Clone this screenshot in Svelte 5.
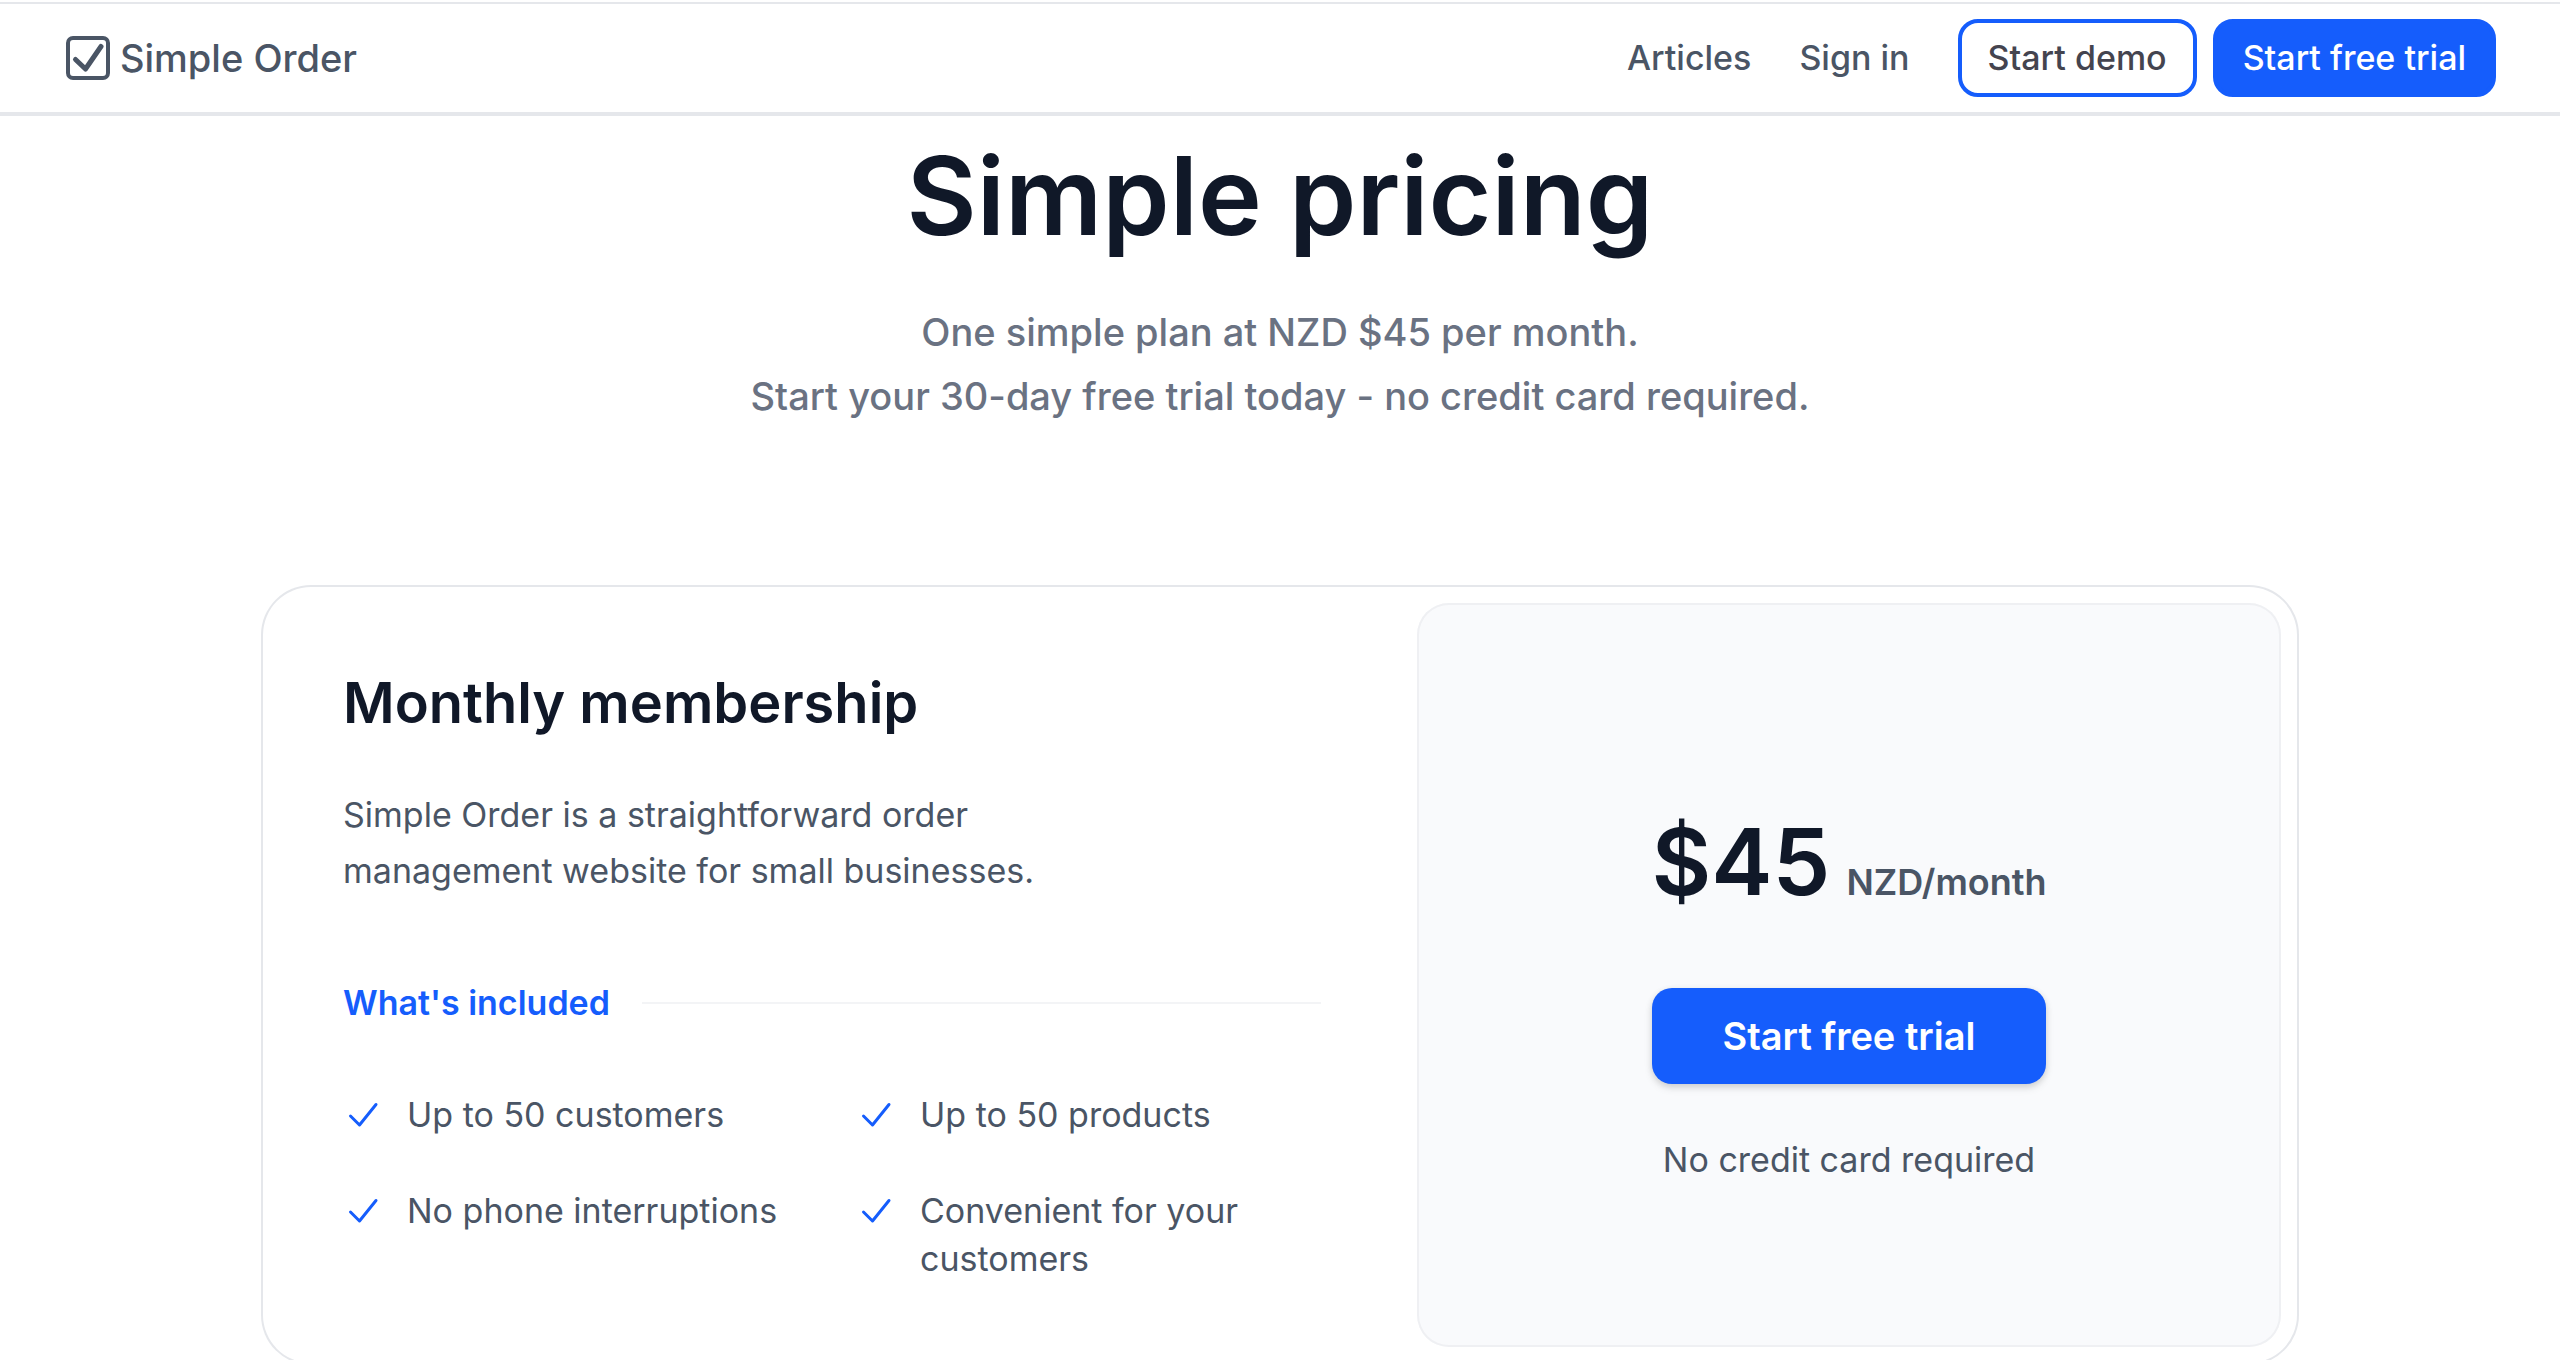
<script lang="ts">
	const links = [
		{ label: "Articles", href: "#articles" },
		{ label: "Sign in", href: "#sign-in" },
	];

	const features = [
		"Up to 50 customers",
		"Up to 50 products",
		"No phone interruptions",
		"Convenient for your customers",
	];
</script>

<div class="page">
	<header>
		<a class="logo" href="#home">
			<svg viewBox="0 0 48 48" fill="none" stroke="currentColor" aria-hidden="true">
				<rect x="4" y="4" width="40" height="40" rx="5" stroke-width="4" />
				<path
					d="M11.500 25.500l10 9.500L37 12.500"
					stroke-width="5"
					stroke-linecap="round"
					stroke-linejoin="round"
				/>
			</svg>
			<span>Simple Order</span>
		</a>
		<nav>
			{#each links as link}
				<a href={link.href}>{link.label}</a>
			{/each}
			<div class="actions">
				<button class="btn outline" type="button">Start demo</button>
				<button class="btn" type="button">Start free trial</button>
			</div>
		</nav>
	</header>

	<main>
		<section class="intro">
			<h1>Simple pricing</h1>
			<p>
				One simple plan at NZD $45 per month.<br />
				Start your 30-day free trial today - no credit card required.
			</p>
		</section>

		<section class="card">
			<div class="details">
				<h2>Monthly membership</h2>
				<p>Simple Order is a straightforward order management website for small businesses.</p>
				<div class="divider">
					<h3>What's included</h3>
					<span class="line"></span>
				</div>
				<ul>
					{#each features as feature}
						<li>
							<svg viewBox="0 0 40 48" fill="none" stroke="currentColor" aria-hidden="true">
								<path
									d="M7.500 25l9 9L33 13.500"
									stroke-width="3"
									stroke-linecap="round"
									stroke-linejoin="round"
								/>
							</svg>
							<span>{feature}</span>
						</li>
					{/each}
				</ul>
			</div>
			<div class="side">
				<div class="panel">
					<p class="price">
						<span class="amount">$45</span>
						<span class="unit">NZD/month</span>
					</p>
					<button class="buy" type="button">Start free trial</button>
					<p class="note">No credit card required</p>
				</div>
			</div>
		</section>
	</main>
</div>

<style>
	:global(body) {
		margin: 0;
		background: #fff;
	}
	.page {
		box-sizing: border-box;
		height: 100vh;
		overflow: hidden;
		padding-top: 2px;
		font-family: Inter, "Liberation Sans", sans-serif;
		font-size: 34px;
		line-height: 48px;
		color: #4a5565;
	}
	h1,
	h2,
	h3,
	p,
	ul {
		margin: 0;
		padding: 0;
	}
	a {
		color: inherit;
		text-decoration: none;
	}
	button {
		font-family: inherit;
		cursor: pointer;
	}

	header {
		display: flex;
		align-items: center;
		justify-content: space-between;
		height: 108px;
		padding: 0 64px;
		border-top: 2px solid #e5e7eb;
		border-bottom: 4px solid #e5e7eb;
		font-weight: 500;
	}
	.logo {
		display: flex;
		align-items: center;
		gap: 8px;
		font-size: 38px;
	}
	.logo svg {
		width: 48px;
		height: 48px;
	}
	nav {
		display: flex;
		align-items: center;
		gap: 48px;
	}
	.actions {
		display: flex;
		gap: 16px;
	}
	.btn {
		padding: 11px 26px;
		border: 4px solid #155dfc;
		border-radius: 20px;
		background: #155dfc;
		color: #fff;
		font-size: 34px;
		line-height: 48px;
		font-weight: 500;
	}
	.outline {
		background: #fff;
		color: #44444f;
	}

	.intro {
		padding-top: 20px;
		text-align: center;
	}
	h1 {
		font-size: 108px;
		line-height: 120px;
		font-weight: 600;
		color: #101828;
	}
	.intro p {
		margin-top: 44px;
		font-size: 38px;
		line-height: 64px;
		font-weight: 500;
		color: #6a7282;
	}

	.card {
		display: flex;
		max-width: 2034px;
		margin: 159px auto 0;
		border-radius: 48px;
		box-shadow: 0 0 0 2px #e5e7eb;
	}
	.details {
		flex: 1;
		padding: 80px;
	}
	h2 {
		font-size: 56px;
		line-height: 72px;
		font-weight: 600;
		color: #101828;
	}
	.details p {
		max-width: 768px;
		margin-top: 48px;
		line-height: 56px;
	}
	.divider {
		display: flex;
		align-items: center;
		gap: 32px;
		margin-top: 80px;
	}
	h3 {
		font-size: 34px;
		line-height: 48px;
		font-weight: 600;
		color: #155dfc;
	}
	.line {
		flex: 1;
		height: 2px;
		background: #f3f4f6;
	}
	ul {
		display: grid;
		grid-template-columns: 1fr 1fr;
		gap: 48px;
		margin-top: 64px;
		list-style: none;
	}
	li {
		display: flex;
		gap: 24px;
	}
	li svg {
		flex: none;
		width: 40px;
		height: 48px;
		color: #155dfc;
	}

	.side {
		display: flex;
		box-sizing: border-box;
		width: 896px;
		padding: 16px;
	}
	.panel {
		display: flex;
		flex: 1;
		flex-direction: column;
		align-items: center;
		justify-content: center;
		padding-top: 52px;
		border-radius: 32px;
		background: #f9fafc;
		box-shadow: inset 0 0 0 2px #eff0f3;
	}
	.price {
		display: flex;
		align-items: baseline;
		gap: 16px;
	}
	.amount {
		font-size: 92px;
		line-height: 96px;
		font-weight: 600;
		color: #101828;
	}
	.unit {
		font-size: 36px;
		font-weight: 600;
	}
	.buy {
		margin-top: 78px;
		padding: 24px 70px;
		border: 0;
		border-radius: 20px;
		background: #155dfc;
		color: #fff;
		font-size: 38px;
		line-height: 48px;
		font-weight: 600;
		box-shadow:
			0 2px 6px rgba(0, 0, 0, 0.1),
			0 4px 8px rgba(0, 0, 0, 0.1);
	}
	.note {
		margin-top: 48px;
		line-height: 56px;
	}
</style>
